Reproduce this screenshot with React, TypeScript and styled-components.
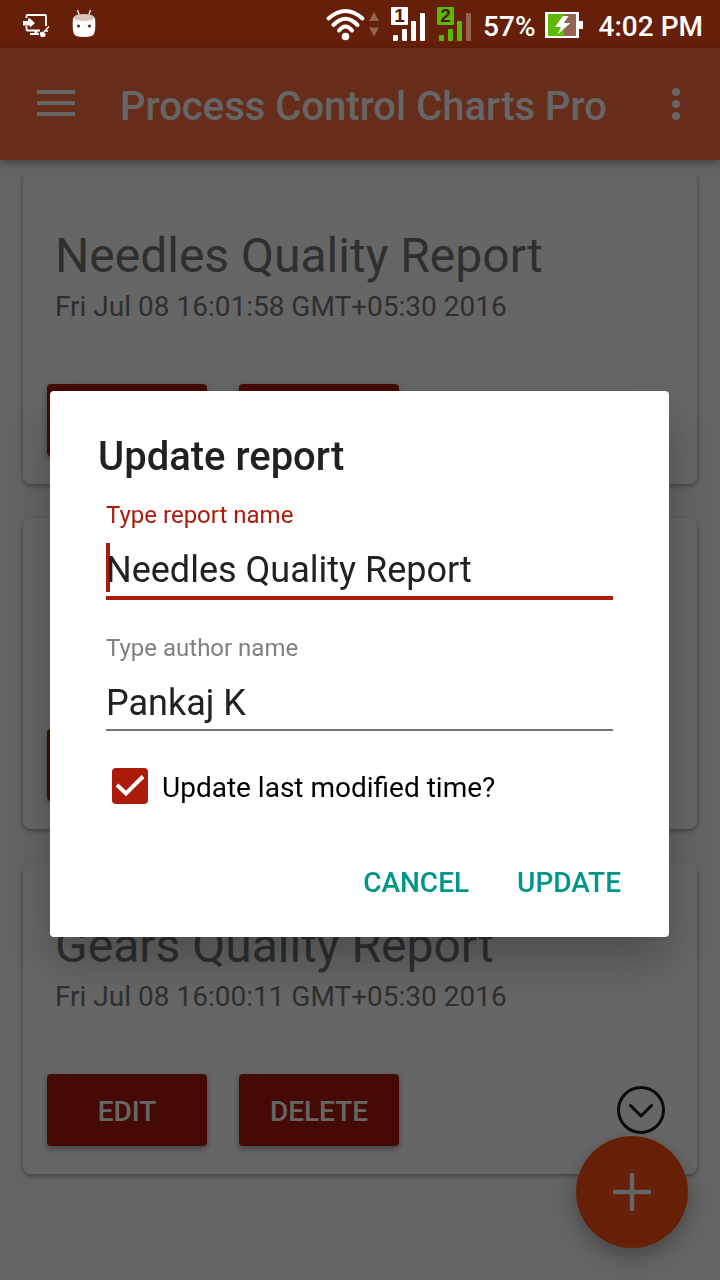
import React, { useState } from "react";
import styled, { createGlobalStyle } from "styled-components";

const RED = "#ac1b0a";
const TEAL = "#009688";
const FAINT = "#956352";
const GREEN = "#5cb800";

const GlobalStyle = createGlobalStyle`
  * { box-sizing: border-box; }
  body { margin: 0; background: #fafafa; }
  body, button, input { font-family: Roboto, "Liberation Sans", sans-serif; }
  button { border: 0; margin: 0; padding: 0; background: none; cursor: pointer; }
  h1, h2, p { margin: 0; }
  svg { display: block; flex: none; }
`;

const Screen = styled.div`
  display: flex;
  flex-direction: column;
  height: 100vh;
  overflow: hidden;
`;

const StatusBar = styled.header`
  position: relative;
  z-index: 3;
  display: flex;
  align-items: center;
  justify-content: space-between;
  flex: none;
  height: 48px;
  padding: 0 17px 0 22px;
  background: linear-gradient(#661f08 42px, #5c1b08 48px);
  color: #fff;
`;

const Notifications = styled.div`
  display: flex;
  align-items: center;
  gap: 22px;
`;

const SystemIcons = styled.div`
  display: flex;
  align-items: center;
  gap: 9px;
`;

const StatusText = styled.span`
  padding-top: 6px;
  font-size: 28px;
  line-height: 32px;
  font-weight: 500;
  white-space: nowrap;
`;

const Clock = styled(StatusText)`
  margin-left: 7px;
`;

const Toolbar = styled.nav`
  position: relative;
  z-index: 1;
  display: flex;
  align-items: center;
  flex: none;
  height: 112px;
  padding: 0 20px 0 32px;
  background: #ff7043;
  color: #fff;
  box-shadow: 0 2px 8px rgba(0, 0, 0, 0.4);
`;

const IconButton = styled.button`
  display: grid;
  place-items: center;
  flex: none;
  width: 48px;
  height: 48px;
  color: inherit;
`;

const ToolbarTitle = styled.h1`
  flex: 1;
  padding-top: 6px;
  margin-left: 40px;
  font-size: 40px;
  line-height: 48px;
  font-weight: 500;
  white-space: nowrap;
`;

const ScrollArea = styled.main`
  flex: 1;
  min-height: 0;
  margin-top: 16px;
  overflow: hidden;
`;

const CardList = styled.div`
  display: flex;
  flex-direction: column;
  gap: 34px;
  margin-top: -3px;
  padding: 0 23px;
`;

const Card = styled.article`
  display: flex;
  flex-direction: column;
  padding: 55px 32px 28px 24px;
  border-radius: 8px;
  background: #fff;
  box-shadow: 0 2px 5px rgba(0, 0, 0, 0.35);
`;

const CardText = styled.div`
  display: flex;
  flex-direction: column;
  gap: 7px;
  height: 94px;
  margin-bottom: 62px;
  padding-left: 8px;
  color: #757575;
  white-space: nowrap;
`;

const CardTitle = styled.h2`
  font-size: 48px;
  line-height: 56px;
  font-weight: 400;
`;

const CardDate = styled.p`
  font-size: 28px;
  line-height: 32px;
`;

const CardActions = styled.div`
  display: flex;
  align-items: center;
  gap: 32px;
`;

const RaisedButton = styled.button`
  width: 160px;
  height: 72px;
  padding-top: 4px;
  border-radius: 4px;
  background: ${RED};
  color: #fff;
  font-size: 28px;
  line-height: 32px;
  font-weight: 500;
  box-shadow: 0 3px 6px rgba(0, 0, 0, 0.35);
`;

const ExpandButton = styled(IconButton)`
  margin-left: auto;
  color: #1c1c1c;
`;

const Fab = styled.button`
  position: fixed;
  right: 32px;
  bottom: 32px;
  display: grid;
  place-items: center;
  width: 112px;
  height: 112px;
  border-radius: 50%;
  background: #ff5016;
  color: #fff;
  box-shadow: 0 8px 20px rgba(0, 0, 0, 0.3);
`;

const Scrim = styled.div`
  position: fixed;
  inset: 0;
  z-index: 2;
  display: flex;
  align-items: center;
  padding: 48px 51px 0 50px;
  background: rgba(0, 0, 0, 0.6);
`;

const Dialog = styled.form`
  flex: 1;
  min-width: 0;
  padding: 42px 48px 18px;
  border-radius: 4px;
  background: #fff;
  color: #212121;
  box-shadow: 0 24px 48px rgba(0, 0, 0, 0.25);
`;

const DialogTitle = styled.h2`
  font-size: 40px;
  line-height: 48px;
  font-weight: 500;
`;

const Fields = styled.div`
  display: flex;
  flex-direction: column;
  gap: 34px;
  padding: 20px 8px 0;
`;

const Field = styled.div`
  position: relative;
  display: flex;
  flex-direction: column;
  height: 99px;
`;

const FieldLabel = styled.label<{ $active?: boolean }>`
  flex: none;
  font-size: 24px;
  line-height: 28px;
  color: ${(p) => (p.$active ? RED : "#808080")};
`;

const FieldInput = styled.input<{ $active?: boolean }>`
  position: relative;
  flex: none;
  width: 100%;
  height: ${(p) => (p.$active ? 71 : 69)}px;
  padding: 15px 0 0;
  border: 0;
  border-bottom: ${(p) => (p.$active ? `4px solid ${RED}` : "2px solid #757575")};
  border-radius: 0;
  outline: none;
  background: transparent;
  color: #212121;
  font-size: 36px;
  caret-color: ${RED};
`;

const Caret = styled.span`
  position: absolute;
  left: 0;
  bottom: 8px;
  width: 4px;
  height: 49px;
  background: ${RED};
`;

const CheckRow = styled.label`
  display: flex;
  align-items: center;
  gap: 14px;
  margin-top: 35px;
  padding-left: 14px;
  color: #000;
  font-size: 28px;
  line-height: 32px;
`;

const CheckFrame = styled.span`
  display: grid;
  flex: none;
  width: 36px;
  height: 36px;

  > * { grid-area: 1 / 1; }
  > svg { position: relative; pointer-events: none; }
`;

const CheckInput = styled.input`
  appearance: none;
  width: 36px;
  height: 36px;
  margin: 0;
  border: 4px solid #757575;
  border-radius: 4px;

  &:checked { border-color: ${RED}; background: ${RED}; }
`;

const CheckText = styled.span`
  padding-top: 4px;
`;

const DialogActions = styled.div`
  display: flex;
  justify-content: flex-end;
  gap: 48px;
  margin-top: 43px;
`;

const FlatButton = styled.button`
  height: 72px;
  color: ${TEAL};
  font-size: 28px;
  line-height: 32px;
  font-weight: 500;
`;

const MonitorIcon = () => (
  <svg width="28" height="28" viewBox="0 0 28 28" fill="none">
    <path d="M4.500 8V6Q4.500 5 5.500 5H23Q24 5 24 6V16M4.500 16V19.500Q4.500 20.500 5.500 20.500H18" stroke="#fff" strokeWidth="1.800" />
    <path d="M1 11H6V8.500H8L13 13L8 17.500V15.500H1Z" fill="#fff" />
    <path d="M12.500 21H15.500V23H17V25H8V23H12.500Z" fill="#fff" />
    <path d="M18 22.500L20.500 21.500L21.500 22.500L24 24L22.500 27H19L18 25Z" fill="#fff" />
    <path d="M21.500 22.500L27 16.500M22.500 21H26" stroke="#fff" strokeWidth="1.300" />
  </svg>
);

const JarIcon = () => (
  <svg width="24" height="30" viewBox="0 0 24 30">
    <path d="M5.500 1L7.500 7M18.500 1L16.500 7" stroke="#e9d9d4" strokeWidth="1.500" />
    <path d="M1 9Q0 20 2 25Q3 28 12 28Q21 28 22 25Q24 20 23 9Z" fill="#fff" />
    <ellipse cx="12" cy="8.500" rx="10.500" ry="3.500" fill="#d9c5be" />
    <circle cx="6.500" cy="17" r="1.500" fill="#661f08" />
    <circle cx="17.500" cy="17" r="1.500" fill="#661f08" />
  </svg>
);

const WifiIcon = () => (
  <svg width="57" height="48" viewBox="326 0 57 48" fill="none">
    <g stroke="#fff" strokeWidth="4" strokeLinecap="round">
      <path d="M329.500 18.500Q346.500 3.500 363.500 18.500" />
      <path d="M334.500 25Q346.500 12.500 358.500 25" />
      <path d="M340 30.500Q346.500 22.500 353 30.500" />
    </g>
    <circle cx="346.500" cy="36.500" r="3.800" fill="#fff" />
    <path d="M370 21L375 12L380 21ZM370 27.500L375 36.500L380 27.500Z" fill={FAINT} />
  </svg>
);

const SignalIcon = ({ sim, color, last }: { sim: string; color: string; last: string }) => (
  <svg width="37" height="48" viewBox="0 0 37 48">
    <rect x="0" y="7" width="17" height="18" rx="1" fill={color} />
    <text x="8.500" y="22" textAnchor="middle" fontFamily="Liberation Sans, sans-serif" fontSize="19" fontWeight="700" fill="#4c1a08">
      {sim}
    </text>
    <rect x="2" y="35" width="5" height="6" rx="1" fill={color} />
    <rect x="11" y="29" width="5" height="12" rx="1" fill={color} />
    <rect x="20" y="21" width="5" height="20" rx="1" fill={color} />
    <rect x="29" y="13" width="5" height="28" rx="1" fill={last} />
  </svg>
);

const BatteryIcon = () => (
  <svg width="38" height="48" viewBox="0 0 38 48">
    <path d="M0 12H34V21H38V29H34V38H0Z" fill="#fff" />
    <rect x="3" y="14" width="16" height="22" fill={GREEN} />
    <rect x="19" y="14" width="12" height="22" fill={FAINT} />
    <path d="M18 16H23.500L19 23H25.500L12.500 34.500L16 27H10Z" fill="#fff" />
  </svg>
);

const MenuIcon = () => (
  <svg width="38" height="28" viewBox="0 0 38 28" fill="currentColor">
    <path d="M0 0H38V4H0ZM0 11H38V15H0ZM0 22H38V26H0Z" />
  </svg>
);

const MoreIcon = () => (
  <svg width="8" height="32" viewBox="0 0 8 32" fill="currentColor">
    <circle cx="4" cy="4" r="4" />
    <circle cx="4" cy="16" r="4" />
    <circle cx="4" cy="28" r="4" />
  </svg>
);

const ExpandIcon = () => (
  <svg width="48" height="48" viewBox="0 0 48 48" fill="none" stroke="currentColor" strokeWidth="3">
    <circle cx="24" cy="24" r="22.500" />
    <path d="M13.500 19.500L24 30L34.500 19.500" strokeLinecap="round" />
  </svg>
);

const PlusIcon = () => (
  <svg width="38" height="38" viewBox="0 0 38 38" fill="currentColor">
    <path d="M16.800 0H21.200V16.800H38V21.200H21.200V38H16.800V21.200H0V16.800H16.800Z" />
  </svg>
);

const CheckIcon = () => (
  <svg width="36" height="36" viewBox="0 0 36 36" fill="none">
    <path d="M5 17L14 25.500L31 8.500" stroke="#fff" strokeWidth="4" />
  </svg>
);

interface Report {
  id: number;
  title?: string;
  date?: string;
}

const reports: Report[] = [
  { id: 1, title: "Needles Quality Report", date: "Fri Jul 08 16:01:58 GMT+05:30 2016" },
  { id: 2 },
  { id: 3, title: "Gears Quality Report", date: "Fri Jul 08 16:00:11 GMT+05:30 2016" },
];

const ReportCard = ({ title, date }: Report) => (
  <Card>
    <CardText>
      {title && <CardTitle>{title}</CardTitle>}
      {date && <CardDate>{date}</CardDate>}
    </CardText>
    <CardActions>
      <RaisedButton type="button">EDIT</RaisedButton>
      <RaisedButton type="button">DELETE</RaisedButton>
      <ExpandButton type="button" aria-label="Expand">
        <ExpandIcon />
      </ExpandButton>
    </CardActions>
  </Card>
);

export default function App() {
  const [name, setName] = useState("Needles Quality Report");
  const [author, setAuthor] = useState("Pankaj K");
  const [touch, setTouch] = useState(true);

  return (
    <Screen>
      <GlobalStyle />
      <StatusBar>
        <Notifications>
          <MonitorIcon />
          <JarIcon />
        </Notifications>
        <SystemIcons>
          <WifiIcon />
          <SignalIcon sim="1" color="#fff" last="#fff" />
          <SignalIcon sim="2" color={GREEN} last={FAINT} />
          <StatusText>57%</StatusText>
          <BatteryIcon />
          <Clock>4:02 PM</Clock>
        </SystemIcons>
      </StatusBar>

      <Toolbar>
        <IconButton type="button" aria-label="Menu">
          <MenuIcon />
        </IconButton>
        <ToolbarTitle>Process Control Charts Pro</ToolbarTitle>
        <IconButton type="button" aria-label="More options">
          <MoreIcon />
        </IconButton>
      </Toolbar>

      <ScrollArea>
        <CardList>
          {reports.map((report) => (
            <ReportCard key={report.id} {...report} />
          ))}
        </CardList>
      </ScrollArea>

      <Fab type="button" aria-label="Add report">
        <PlusIcon />
      </Fab>

      <Scrim>
        <Dialog role="dialog" aria-labelledby="dialog-title" onSubmit={(e) => e.preventDefault()}>
          <DialogTitle id="dialog-title">Update report</DialogTitle>
          <Fields>
            <Field>
              <FieldLabel htmlFor="report-name" $active>
                Type report name
              </FieldLabel>
              <Caret />
              <FieldInput id="report-name" $active value={name} onChange={(e) => setName(e.target.value)} />
            </Field>
            <Field>
              <FieldLabel htmlFor="author-name">Type author name</FieldLabel>
              <FieldInput id="author-name" value={author} onChange={(e) => setAuthor(e.target.value)} />
            </Field>
          </Fields>
          <CheckRow>
            <CheckFrame>
              <CheckInput type="checkbox" checked={touch} onChange={(e) => setTouch(e.target.checked)} />
              {touch && <CheckIcon />}
            </CheckFrame>
            <CheckText>Update last modified time?</CheckText>
          </CheckRow>
          <DialogActions>
            <FlatButton type="button">CANCEL</FlatButton>
            <FlatButton type="submit">UPDATE</FlatButton>
          </DialogActions>
        </Dialog>
      </Scrim>
    </Screen>
  );
}
